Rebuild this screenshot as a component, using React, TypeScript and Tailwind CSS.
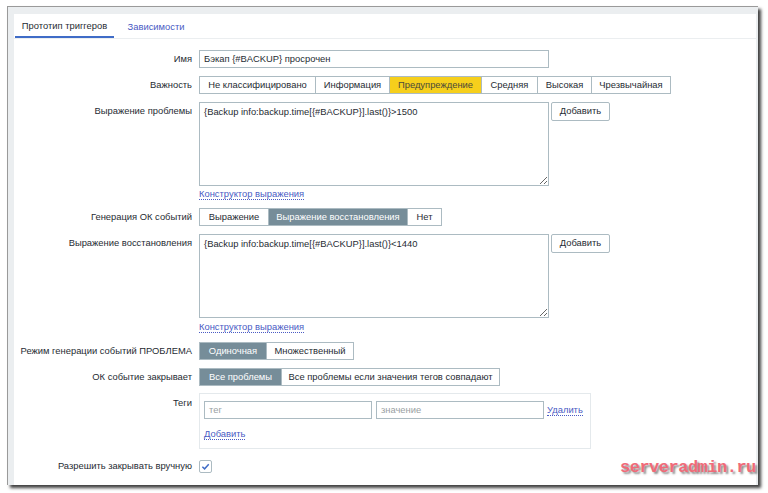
import React from 'react';

const font = { fontFamily: '"Liberation Sans", Arial, sans-serif' };

function Label({ children, className = '' }: { children?: React.ReactNode; className?: string }) {
  return (
    <div
      className={`w-[185px] shrink-0 pr-[7px] text-right text-[9.4px] text-[#1f2c33] leading-[18px] whitespace-nowrap ${className}`}
    >
      {children}
    </div>
  );
}

interface Seg {
  label: string;
  w: string;
  active?: boolean;
  warn?: boolean;
}

function Segmented({ items }: { items: Seg[] }) {
  return (
    <div className="flex h-[18px] border border-[#acbbc2] bg-white">
      {items.map((s, i) => (
        <div
          key={s.label}
          className={`${s.w} flex items-center justify-center whitespace-nowrap text-[9.4px] ${i > 0 ? 'border-l border-[#acbbc2]' : ''} ${
            s.active ? 'bg-[#768d99] text-white' : s.warn ? 'bg-[#f6cf1c] text-[#4a4a3a]' : 'text-[#1f2c33]'
          }`}
        >
          {s.label}
        </div>
      ))}
    </div>
  );
}

function LinkText({ children }: { children: React.ReactNode }) {
  return (
    <span className="text-[9.4px] text-[#4a5bc4] border-b border-dotted border-[#4a5bc4] leading-[11px] whitespace-nowrap">
      {children}
    </span>
  );
}

function ExprRow({ label, value }: { label: string; value: string }) {
  return (
    <div className="flex">
      <Label>{label}</Label>
      <textarea
        readOnly
        value={value}
        className="w-[350px] h-[84px] border border-[#acbbc2] px-[4px] py-[3px] text-[9.4px] text-[#1f2c33] leading-[12px] outline-none resize-y"
        style={font}
      />
      <div className="ml-[2px] w-[59px] h-[19px] border border-[#acbbc2] rounded-[2px] flex items-center justify-center text-[9.4px] text-[#1f2c33] bg-white">
        Добавить
      </div>
    </div>
  );
}

export default function App() {
  return (
    <div className="w-[768px] h-[493px] bg-white relative overflow-hidden" style={font}>
      <div className="absolute left-[7px] top-[6px] w-[751px] h-[479px] border-l border-t border-[#9a9a9a] bg-[#ebeef0] pl-[6px] pt-[7px] pr-[2px] shadow-[3px_3px_3px_rgba(0,0,0,0.75)]">
        <div className="bg-white h-full">
          <div className="flex h-[25px] border-b border-[#ebeef0] pl-[1px]">
            <div className="w-[99px] flex items-center justify-center text-[9.4px] text-[#1f2c33] border-b-2 border-[#3f6cc7] pt-[2px]">
              Прототип триггеров
            </div>
            <div className="w-[84px] flex items-center justify-center text-[9.4px] text-[#4a5bc4] pt-[2px]">
              Зависимости
            </div>
          </div>

          <div className="flex flex-col pt-[11px] gap-[8px]">
            <div className="flex">
              <Label>Имя</Label>
              <div className="w-[350px] h-[18px] border border-[#acbbc2] px-[4px] flex items-center text-[9.4px] text-[#1f2c33]">
                Бэкап {'{#BACKUP}'} просрочен
              </div>
            </div>

            <div className="flex">
              <Label>Важность</Label>
              <Segmented
                items={[
                  { label: 'Не классифицировано', w: 'w-[115px]' },
                  { label: 'Информация', w: 'w-[74px]' },
                  { label: 'Предупреждение', w: 'w-[92px]', warn: true },
                  { label: 'Средняя', w: 'w-[56px]' },
                  { label: 'Высокая', w: 'w-[54px]' },
                  { label: 'Чрезвычайная', w: 'w-[79px]' },
                ]}
              />
            </div>

            <ExprRow label="Выражение проблемы" value="{Backup info:backup.time[{#BACKUP}].last()}>1500" />

            <div className="flex -mt-[6px] h-[12px]">
              <Label />
              <LinkText>Конструктор выражения</LinkText>
            </div>

            <div className="flex">
              <Label>Генерация ОК событий</Label>
              <Segmented
                items={[
                  { label: 'Выражение', w: 'w-[68px]' },
                  { label: 'Выражение восстановления', w: 'w-[139px]', active: true },
                  { label: 'Нет', w: 'w-[34px]' },
                ]}
              />
            </div>

            <ExprRow label="Выражение восстановления" value="{Backup info:backup.time[{#BACKUP}].last()}<1440" />

            <div className="flex -mt-[5px] h-[12px]">
              <Label />
              <LinkText>Конструктор выражения</LinkText>
            </div>

            <div className="flex mt-[1px]">
              <Label>Режим генерации событий ПРОБЛЕМА</Label>
              <Segmented
                items={[
                  { label: 'Одиночная', w: 'w-[66px]', active: true },
                  { label: 'Множественный', w: 'w-[87px]' },
                ]}
              />
            </div>

            <div className="flex">
              <Label>ОК событие закрывает</Label>
              <Segmented
                items={[
                  { label: 'Все проблемы', w: 'w-[81px]', active: true },
                  { label: 'Все проблемы если значения тегов совпадают', w: 'w-[218px]' },
                ]}
              />
            </div>

            <div className="flex -mt-[1px]">
              <Label className="pt-[1px]">Теги</Label>
              <div className="w-[392px] h-[56px] border border-[#e4e9ec] px-[4px] pt-[7px]">
                <div className="flex items-center">
                  <div className="w-[168px] h-[18px] border border-[#acbbc2] px-[4px] flex items-center text-[9.4px] text-[#9a9fa3]">
                    тег
                  </div>
                  <div className="ml-[4px] w-[168px] h-[18px] border border-[#acbbc2] px-[4px] flex items-center text-[9.4px] text-[#9a9fa3]">
                    значение
                  </div>
                  <div className="ml-[3px] flex items-center h-[18px]">
                    <LinkText>Удалить</LinkText>
                  </div>
                </div>
                <div className="mt-[9px] flex h-[12px] items-center">
                  <LinkText>Добавить</LinkText>
                </div>
              </div>
            </div>

            <div className="flex items-center">
              <Label>Разрешить закрывать вручную</Label>
              <div className="w-[13px] h-[13px] border border-[#acbbc2] rounded-[2px] flex items-center justify-center">
                <svg width="9" height="9" viewBox="0 0 10 10" fill="none">
                  <path d="M1.5 5.2 L4 7.6 L8.6 2.4" stroke="#3f6cc7" strokeWidth="1.6" />
                </svg>
              </div>
            </div>
          </div>
        </div>
      </div>

      <div
        className="absolute left-[620px] top-[455px] text-[17px] font-bold tracking-[-0.5px] text-[#f06a78]"
        style={{ fontFamily: '"Liberation Mono", "DejaVu Sans Mono", monospace', textShadow: '2px 2px 2px rgba(90,90,90,0.7)' }}
      >
        serveradmin.ru
      </div>
    </div>
  );
}
